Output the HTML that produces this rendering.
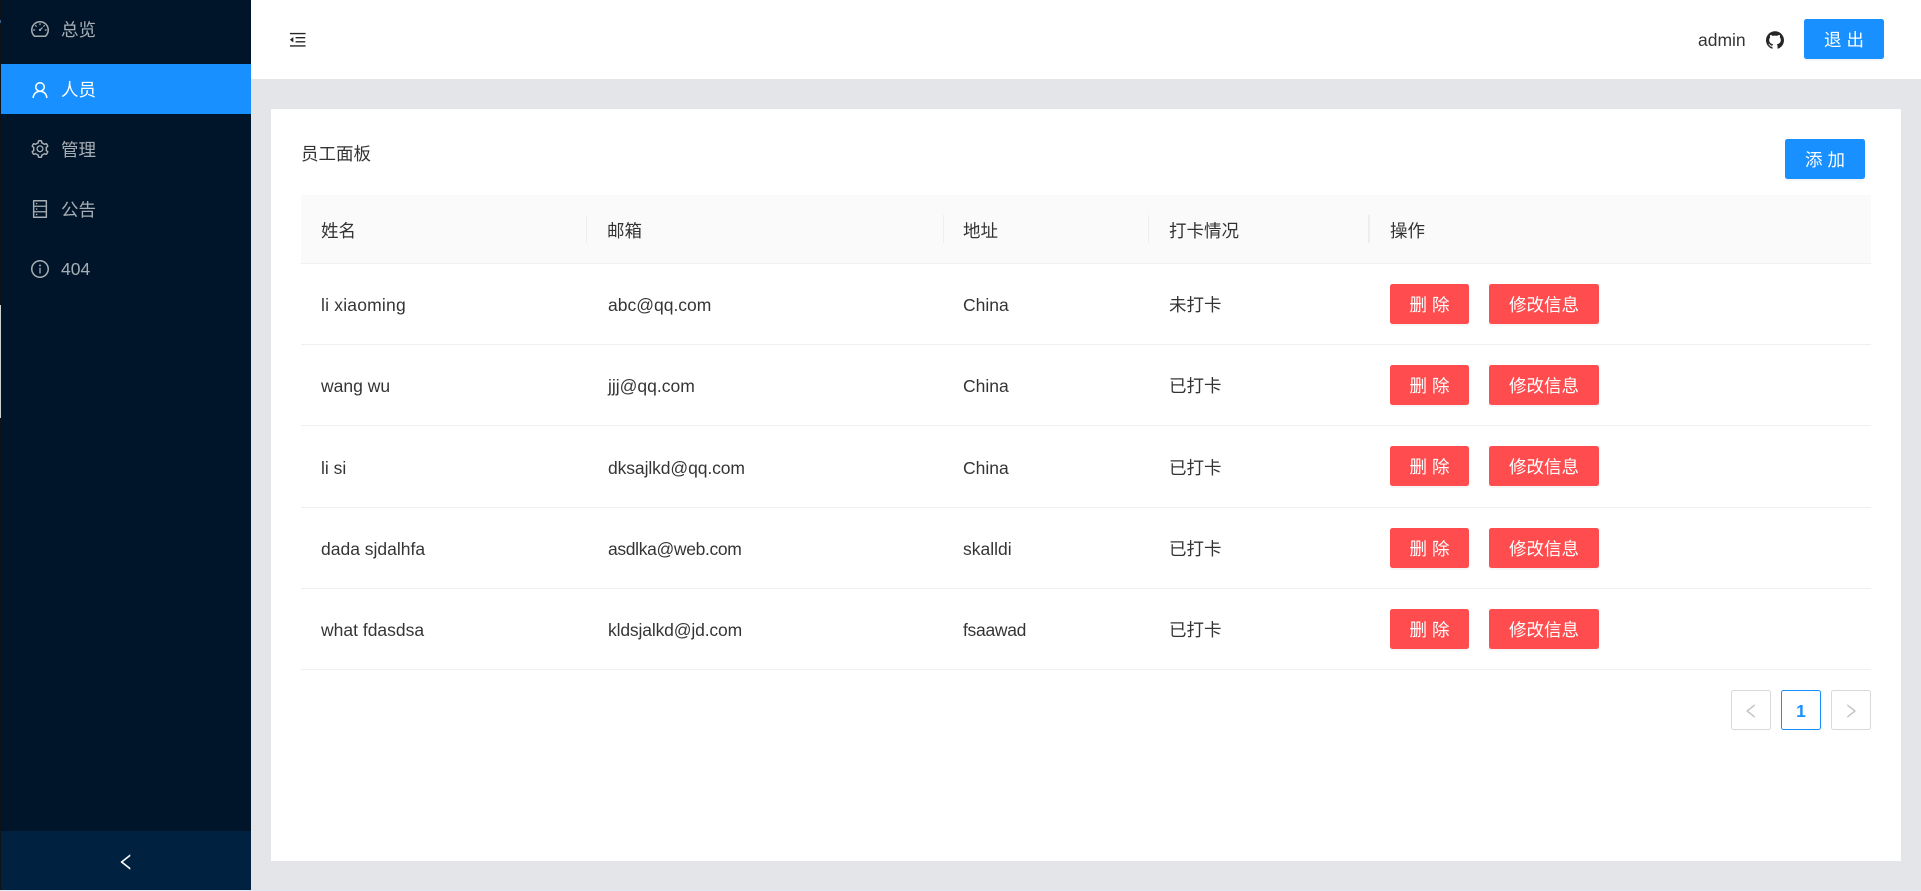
<!DOCTYPE html>
<html lang="zh-CN">
<head>
<meta charset="utf-8">
<title>员工面板</title>
<style>
html,body{margin:0;padding:0;width:1921px;height:891px;overflow:hidden;background:#e4e5e9;}
body{position:relative;font-family:"Liberation Sans","Noto Sans CJK SC",sans-serif;font-size:17.5px;color:rgba(0,0,0,.8);}
.a{position:absolute;white-space:nowrap;line-height:24px;}
svg{position:absolute;display:block;}
.m{color:rgba(255,255,255,.65);left:61px;}
.btn{position:absolute;height:40px;border-radius:2.5px;color:#fff;text-align:center;line-height:43px;box-shadow:0 2px 0 rgba(0,0,0,.04);white-space:nowrap;}
.blue{background:#1890ff;width:80px;}
.red{background:#ff4d4f;}
.sp{letter-spacing:5px;text-indent:5px;}
.line{position:absolute;left:301px;width:1570px;height:1px;background:#f0f0f0;}
.sep{position:absolute;top:215px;width:1px;height:28px;background:#eeeeee;}
.pg{position:absolute;top:690px;width:38px;height:38px;border:1px solid #d9d9d9;border-radius:2.5px;background:#fff;}
</style>
</head>
<body>
<!-- sidebar -->
<div style="position:absolute;left:0;top:0;width:1px;height:891px;background:#0e1116"></div>
<div style="position:absolute;left:0;top:20px;width:1px;height:3px;background:#3a5f95"></div>
<div style="position:absolute;left:0;top:305px;width:1px;height:113px;background:#cfd0d2"></div>
<div style="position:absolute;left:1px;top:0;width:250px;height:891px;background:#001529"></div>
<div style="position:absolute;left:1px;top:64px;width:250px;height:50px;background:#1890ff"></div>
<div style="position:absolute;left:1px;top:831px;width:250px;height:59px;background:#002140"></div>

<svg style="left:31px;top:20px" width="18" height="18" viewBox="64 64 896 896" fill="rgba(255,255,255,.65)"><path d="M924.8 385.6a446.7 446.7 0 0 0-96-142.4 446.7 446.7 0 0 0-142.4-96C631.1 123.8 572.5 112 512 112s-119.1 11.8-174.4 35.2a446.7 446.7 0 0 0-142.4 96 446.7 446.7 0 0 0-96 142.4C75.8 440.9 64 499.5 64 560c0 132.7 58.3 257.7 159.9 343.1l1.7 1.4c5.8 4.8 13.1 7.5 20.6 7.5h531.7c7.5 0 14.8-2.7 20.6-7.5l1.7-1.4C901.7 817.7 960 692.7 960 560c0-60.5-11.9-119.1-35.2-174.4zM761.4 836H262.6A371.12 371.12 0 0 1 140 560c0-99.4 38.7-192.8 109-263 70.3-70.3 163.7-109 263-109 99.4 0 192.8 38.7 263 109 70.3 70.3 109 163.7 109 263 0 105.6-44.5 205.5-122.6 276zM623.5 421.5a8.03 8.03 0 0 0-11.3 0L527.7 506c-18.7-5-39.4-.2-54.1 14.5a55.95 55.95 0 0 0 0 79.2 55.95 55.95 0 0 0 79.2 0 55.87 55.87 0 0 0 14.5-54.1l84.5-84.5c3.1-3.1 3.1-8.2 0-11.3l-28.3-28.3zM490 320h44c4.4 0 8-3.6 8-8v-80c0-4.4-3.6-8-8-8h-44c-4.4 0-8 3.6-8 8v80c0 4.4 3.6 8 8 8zm260 218v44c0 4.4 3.6 8 8 8h80c4.4 0 8-3.6 8-8v-44c0-4.4-3.6-8-8-8h-80c-4.4 0-8 3.6-8 8zm12.7-197.2l-31.1-31.1a8.03 8.03 0 0 0-11.3 0l-56.6 56.6a8.03 8.03 0 0 0 0 11.3l31.1 31.1c3.1 3.1 8.2 3.1 11.3 0l56.6-56.6c3.1-3.1 3.1-8.2 0-11.3zm-458.6-31.1a8.03 8.03 0 0 0-11.3 0l-31.1 31.1a8.03 8.03 0 0 0 0 11.3l56.6 56.6c3.1 3.1 8.2 3.1 11.3 0l31.1-31.1c3.1-3.1 3.1-8.2 0-11.3l-56.6-56.6zM262 530h-80c-4.4 0-8 3.6-8 8v44c0 4.4 3.6 8 8 8h80c4.4 0 8-3.6 8-8v-44c0-4.4-3.6-8-8-8z"/></svg>
<div class="a m" style="top:18px">总览</div>

<svg style="left:31px;top:80.5px" width="18" height="18" viewBox="64 64 896 896" fill="#fff"><path d="M858.5 763.6a374 374 0 0 0-80.6-119.5 375.63 375.63 0 0 0-119.5-80.6c-.4-.2-.8-.3-1.2-.5C719.5 518 760 444.7 760 362c0-137-111-248-248-248S264 225 264 362c0 82.7 40.5 156 102.8 201.1-.4.2-.8.3-1.2.5-44.8 18.9-85 46-119.5 80.6a375.63 375.63 0 0 0-80.6 119.5A371.7 371.7 0 0 0 136 901.8a8 8 0 0 0 8 8.2h60c4.4 0 7.9-3.5 8-7.8 2-77.2 33-149.5 87.8-204.3 56.7-56.7 132-87.9 212.2-87.9s155.5 31.2 212.2 87.9C779 752.7 810 825 812 902.2c.1 4.4 3.6 7.8 8 7.8h60a8 8 0 0 0 8-8.2c-1-47.8-10.9-94.3-29.5-138.2zM512 534c-45.9 0-89.1-17.9-121.6-50.4S340 407.9 340 362c0-45.9 17.9-89.1 50.4-121.6S466.1 190 512 190s89.1 17.9 121.6 50.4S684 316.1 684 362c0 45.9-17.9 89.1-50.4 121.6S557.9 534 512 534z"/></svg>
<div class="a m" style="top:78px;color:#fff">人员</div>

<svg style="left:31px;top:140px" width="18" height="18" viewBox="64 64 896 896" fill="rgba(255,255,255,.65)"><path d="M924.8 625.7l-65.5-56c3.1-19 4.7-38.4 4.7-57.8s-1.6-38.8-4.7-57.8l65.5-56a32.03 32.03 0 0 0 9.3-35.2l-.9-2.6a443.74 443.74 0 0 0-79.7-137.9l-1.8-2.1a32.12 32.12 0 0 0-35.1-9.5l-81.3 28.9c-30-24.6-63.5-44-99.7-57.6l-15.7-85a32.05 32.05 0 0 0-25.8-25.7l-2.7-.5c-52.1-9.4-106.9-9.4-159 0l-2.7.5a32.05 32.05 0 0 0-25.8 25.7l-15.8 85.4a351.86 351.86 0 0 0-99 57.4l-81.9-29.1a32 32 0 0 0-35.1 9.5l-1.8 2.1a446.02 446.02 0 0 0-79.7 137.9l-.9 2.6c-4.5 12.5-.8 26.5 9.3 35.2l66.3 56.6c-3.1 18.8-4.6 38-4.6 57.1 0 19.2 1.5 38.4 4.6 57.1L99 625.5a32.03 32.03 0 0 0-9.3 35.2l.9 2.6c18.1 50.4 44.9 96.9 79.7 137.9l1.8 2.1a32.12 32.12 0 0 0 35.1 9.5l81.9-29.1c29.8 24.5 63.1 43.9 99 57.4l15.8 85.4a32.05 32.05 0 0 0 25.8 25.7l2.7.5a449.4 449.4 0 0 0 159 0l2.7-.5a32.05 32.05 0 0 0 25.8-25.7l15.7-85a350 350 0 0 0 99.7-57.6l81.3 28.9a32 32 0 0 0 35.1-9.5l1.8-2.1c34.8-41.1 61.6-87.5 79.7-137.9l.9-2.6c4.5-12.3.8-26.3-9.3-35zM788.3 465.9c2.5 15.1 3.8 30.6 3.8 46.1s-1.3 31-3.8 46.1l-6.6 40.1 74.7 63.9a370.03 370.03 0 0 1-42.6 73.6L721 702.8l-31.4 25.8c-23.9 19.6-50.5 35-79.3 45.8l-38.1 14.3-17.9 97a377.5 377.5 0 0 1-85 0l-17.9-97.2-37.8-14.5c-28.5-10.8-55-26.2-78.7-45.7l-31.4-25.9-93.4 33.2c-17-22.9-31.2-47.6-42.6-73.6l75.5-64.5-6.5-40c-2.4-14.9-3.7-30.3-3.7-45.5 0-15.3 1.2-30.6 3.7-45.5l6.5-40-75.5-64.5c11.3-26.1 25.6-50.7 42.6-73.6l93.4 33.2 31.4-25.9c23.7-19.5 50.2-34.9 78.7-45.7l37.9-14.3 17.9-97.2c28.1-3.2 56.8-3.2 85 0l17.9 97 38.1 14.3c28.7 10.8 55.4 26.2 79.3 45.8l31.4 25.8 92.8-32.9c17 22.9 31.2 47.6 42.6 73.6L781.8 426l6.5 39.9zM512 326c-97.2 0-176 78.8-176 176s78.8 176 176 176 176-78.8 176-176-78.8-176-176-176zm79.2 255.2A111.6 111.6 0 0 1 512 614c-29.9 0-58-11.7-79.2-32.8A111.6 111.6 0 0 1 400 502c0-29.9 11.7-58 32.8-79.2C454 401.6 482.1 390 512 390c29.9 0 58 11.6 79.2 32.8A111.6 111.6 0 0 1 624 502c0 29.9-11.7 58-32.8 79.2z"/></svg>
<div class="a m" style="top:138px">管理</div>

<svg style="left:31px;top:200px" width="18" height="18" viewBox="64 64 896 896" fill="rgba(255,255,255,.65)"><path d="M832 64H192c-17.7 0-32 14.3-32 32v832c0 17.7 14.3 32 32 32h640c17.7 0 32-14.3 32-32V96c0-17.7-14.3-32-32-32zm-600 72h560v208H232V136zm560 480H232V408h560v208zm0 272H232V680h560v208zM304 240a40 40 0 1 0 80 0 40 40 0 1 0-80 0zm0 272a40 40 0 1 0 80 0 40 40 0 1 0-80 0zm0 272a40 40 0 1 0 80 0 40 40 0 1 0-80 0z"/></svg>
<div class="a m" style="top:198px">公告</div>

<svg style="left:31px;top:260px" width="18" height="18" viewBox="64 64 896 896" fill="rgba(255,255,255,.65)"><path d="M512 64C264.6 64 64 264.6 64 512s200.6 448 448 448 448-200.6 448-448S759.4 64 512 64zm0 820c-205.4 0-372-166.6-372-372s166.6-372 372-372 372 166.6 372 372-166.6 372-372 372z"/><path d="M464 336a48 48 0 1 0 96 0 48 48 0 1 0-96 0zm72 112h-48c-4.4 0-8 3.6-8 8v272c0 4.4 3.6 8 8 8h48c4.4 0 8-3.6 8-8V456c0-4.4-3.6-8-8-8z"/></svg>
<div class="a m" style="top:257px">404</div>

<svg style="left:117px;top:852.5px" width="18" height="18" viewBox="64 64 896 896" fill="#fff"><path d="M724 218.3V141c0-6.7-7.7-10.4-12.9-6.3L260.3 486.8a31.86 31.86 0 0 0 0 50.3l450.8 352.1c5.3 4.1 12.9.4 12.9-6.3v-77.3c0-4.9-2.3-9.6-6.1-12.6l-360-281 360-281.1c3.8-3 6.1-7.7 6.1-12.6z"/></svg>

<!-- header -->
<div style="position:absolute;left:251px;top:0;width:1670px;height:79px;background:#fff"></div>
<svg style="left:289px;top:31px" width="17.5" height="17.5" viewBox="64 64 896 896" fill="rgba(0,0,0,.85)"><path d="M408 442h480c4.4 0 8-3.6 8-8v-56c0-4.4-3.6-8-8-8H408c-4.4 0-8 3.6-8 8v56c0 4.4 3.6 8 8 8zm-8 204c0 4.4 3.6 8 8 8h480c4.4 0 8-3.6 8-8v-56c0-4.4-3.6-8-8-8H408c-4.4 0-8 3.6-8 8v56zm504-486H120c-4.4 0-8 3.6-8 8v56c0 4.4 3.6 8 8 8h784c4.4 0 8-3.6 8-8v-56c0-4.4-3.6-8-8-8zm0 632H120c-4.4 0-8 3.6-8 8v56c0 4.4 3.6 8 8 8h784c4.4 0 8-3.6 8-8v-56c0-4.4-3.6-8-8-8zM115.4 518.9L271.7 642c5.8 4.6 14.4.5 14.4-6.9V388.9c0-7.4-8.5-11.5-14.4-6.9L115.4 505.1a8.74 8.74 0 0 0 0 13.8z"/></svg>
<div class="a" style="left:1698px;top:28px">admin</div>
<svg style="left:1766px;top:31px" width="18" height="18" viewBox="64 64 896 896" fill="rgba(0,0,0,.85)"><path d="M511.6 76.3C264.3 76.2 64 276.4 64 523.5 64 718.9 189.3 885 363.8 946c23.5 5.9 19.9-10.8 19.9-22.2v-77.5c-135.7 15.9-141.2-73.9-150.3-88.9C215 726 171.5 718 184.5 703c30.9-15.9 62.4 4 98.9 57.9 26.4 39.1 77.9 32.5 104 26 5.7-23.5 17.9-44.5 34.7-60.8-140.6-25.2-199.2-111-199.2-213 0-49.5 16.3-95 48.3-131.7-20.4-60.5 1.9-112.3 4.9-120 58.1-5.2 118.5 41.6 123.2 45.3 33-8.9 70.7-13.6 112.9-13.6 42.4 0 80.2 4.9 113.5 13.9 11.3-8.6 67.3-48.8 121.3-43.9 2.9 7.7 24.7 58.3 5.5 118 32.4 36.8 48.9 82.7 48.9 132.3 0 102.2-59 188.1-200 212.9a127.5 127.5 0 0 1 38.1 91v112.5c.8 9 0 17.9 15 17.9 177.1-59.7 304.6-227 304.6-424.1 0-247.2-200.4-447.3-447.5-447.3z"/></svg>
<div class="btn blue sp" style="left:1804px;top:19px">退出</div>

<!-- card -->
<div style="position:absolute;left:271px;top:109px;width:1630px;height:752px;background:#fff"></div>
<div class="a" style="left:301px;top:142px">员工面板</div>
<div class="btn blue sp" style="left:1785px;top:139px">添加</div>

<!-- table header -->
<div style="position:absolute;left:301px;top:195px;width:1570px;height:68px;background:#fafafa"></div>
<div class="line" style="top:263px"></div>
<div class="sep" style="left:586px"></div>
<div class="sep" style="left:943px"></div>
<div class="sep" style="left:1148px"></div>
<div class="sep" style="left:1368px;width:2px"></div>
<div class="a" style="left:321px;top:219px">姓名</div>
<div class="a" style="left:607px;top:219px">邮箱</div>
<div class="a" style="left:963px;top:219px">地址</div>
<div class="a" style="left:1169px;top:219px">打卡情况</div>
<div class="a" style="left:1390px;top:219px">操作</div>

<!-- row 1 -->
<div class="a" style="left:321px;top:293px;letter-spacing:.2px">li xiaoming</div>
<div class="a" style="left:608px;top:293px">abc@qq.com</div>
<div class="a" style="left:963px;top:293px">China</div>
<div class="a" style="left:1169px;top:293px">未打卡</div>
<div class="btn red sp" style="left:1390px;top:284px;width:79px">删除</div>
<div class="btn red" style="left:1489px;top:284px;width:110px">修改信息</div>
<div class="line" style="top:344px"></div>
<!-- row 2 -->
<div class="a" style="left:321px;top:374px">wang wu</div>
<div class="a" style="left:608px;top:374px">jjj@qq.com</div>
<div class="a" style="left:963px;top:374px">China</div>
<div class="a" style="left:1169px;top:374px">已打卡</div>
<div class="btn red sp" style="left:1390px;top:365px;width:79px">删除</div>
<div class="btn red" style="left:1489px;top:365px;width:110px">修改信息</div>
<div class="line" style="top:425px"></div>
<!-- row 3 -->
<div class="a" style="left:321px;top:456px">li si</div>
<div class="a" style="left:608px;top:456px;letter-spacing:-.1px">dksajlkd@qq.com</div>
<div class="a" style="left:963px;top:456px">China</div>
<div class="a" style="left:1169px;top:456px">已打卡</div>
<div class="btn red sp" style="left:1390px;top:446px;width:79px">删除</div>
<div class="btn red" style="left:1489px;top:446px;width:110px">修改信息</div>
<div class="line" style="top:507px"></div>
<!-- row 4 -->
<div class="a" style="left:321px;top:537px">dada sjdalhfa</div>
<div class="a" style="left:608px;top:537px;letter-spacing:-.35px">asdlka@web.com</div>
<div class="a" style="left:963px;top:537px">skalldi</div>
<div class="a" style="left:1169px;top:537px">已打卡</div>
<div class="btn red sp" style="left:1390px;top:528px;width:79px">删除</div>
<div class="btn red" style="left:1489px;top:528px;width:110px">修改信息</div>
<div class="line" style="top:588px"></div>
<!-- row 5 -->
<div class="a" style="left:321px;top:618px">what fdasdsa</div>
<div class="a" style="left:608px;top:618px;letter-spacing:-.15px">kldsjalkd@jd.com</div>
<div class="a" style="left:963px;top:618px;letter-spacing:-.3px">fsaawad</div>
<div class="a" style="left:1169px;top:618px">已打卡</div>
<div class="btn red sp" style="left:1390px;top:609px;width:79px">删除</div>
<div class="btn red" style="left:1489px;top:609px;width:110px">修改信息</div>
<div class="line" style="top:669px"></div>

<!-- pagination -->
<div class="pg" style="left:1731px"></div>
<svg style="left:1743px;top:703px" width="16" height="16" viewBox="64 64 896 896" fill="#c4c4c4"><path d="M724 218.3V141c0-6.7-7.7-10.4-12.9-6.3L260.3 486.8a31.86 31.86 0 0 0 0 50.3l450.8 352.1c5.3 4.1 12.9.4 12.9-6.3v-77.3c0-4.9-2.3-9.6-6.1-12.6l-360-281 360-281.1c3.8-3 6.1-7.7 6.1-12.6z"/></svg>
<div class="pg" style="left:1781px;border-color:#1890ff"></div>
<div class="a" style="left:1781px;top:699px;width:40px;text-align:center;color:#1890ff;font-weight:bold">1</div>
<div class="pg" style="left:1831px"></div>
<svg style="left:1843px;top:703px" width="16" height="16" viewBox="64 64 896 896" fill="#c4c4c4"><path d="M765.7 486.8L314.9 134.7A7.97 7.97 0 0 0 302 141v77.3c0 4.9 2.3 9.6 6.1 12.6l360 281.1-360 281.1c-3.9 3-6.1 7.7-6.1 12.6V883c0 6.7 7.7 10.4 12.9 6.3l450.8-352.1a31.96 31.96 0 0 0 0-50.4z"/></svg>

<!-- bottom light row -->
<div style="position:absolute;left:0;top:890px;width:1921px;height:1px;background:#dfe9f3"></div>
</body>
</html>
